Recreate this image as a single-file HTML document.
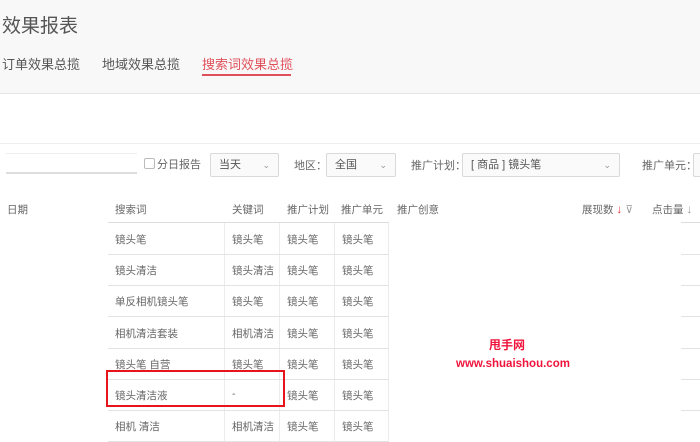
<!DOCTYPE html>
<html><head><meta charset="utf-8"><style>
*{margin:0;padding:0;box-sizing:border-box}
body{width:700px;height:442px;overflow:hidden;background:#fff;font-family:"Liberation Sans","Noto Sans CJK SC",sans-serif;color:#666;position:relative;font-size:11px}
.abs{position:absolute;white-space:nowrap}
.top{position:absolute;left:0;top:0;width:700px;height:94px;background:#f8f8f9;border-bottom:1px solid #e6e6e6}
.sel{position:absolute;height:24px;border:1px solid #d9d9d9;border-radius:2px;background:#fafafa;font-size:11px;line-height:22px;padding-left:8px;color:#555}
.sel i{position:absolute;right:8px;top:0;font-style:normal;color:#999;font-size:9px}
.h{position:absolute;top:202px;font-size:10.5px;color:#666}
.hl{position:absolute;height:1px;background:#e3e3e3}
.vl{position:absolute;width:1px;background:#ececec}
.c{position:absolute;font-size:10.5px;color:#666;white-space:nowrap}
</style></head><body>
<div class="top"></div>
<div class="abs" style="left:2px;top:11px;font-size:19px;color:#555">效果报表</div>
<div class="abs" style="left:2px;top:54px;font-size:13px;color:#555">订单效果总揽</div>
<div class="abs" style="left:102px;top:54px;font-size:13px;color:#555">地域效果总揽</div>
<div class="abs" style="left:202px;top:54px;font-size:13px;color:#e0505a">搜索词效果总揽</div>
<div class="abs" style="left:202px;top:74px;width:89px;height:2px;background:#e0505a"></div>
<div class="hl" style="left:0;top:143px;width:700px;background:#efefef"></div>
<div class="abs" style="left:6px;top:153px;width:131px;height:21px;border-bottom:2px solid #ddd;border-top:1px solid #eee"></div>
<div class="abs" style="left:144px;top:158px;width:11px;height:11px;border:1px solid #bbb;border-radius:2px"></div>
<div class="abs" style="left:157px;top:156px;font-size:11px">分日报告</div>
<div class="sel" style="left:210px;top:153px;width:69px">当天<i>⌄</i></div>
<div class="abs" style="left:294px;top:157px">地区：</div>
<div class="sel" style="left:326px;top:153px;width:70px">全国<i>⌄</i></div>
<div class="abs" style="left:411px;top:157px">推广计划：</div>
<div class="sel" style="left:462px;top:153px;width:158px">[ 商品 ] 镜头笔<i>⌄</i></div>
<div class="abs" style="left:642px;top:157px">推广单元：</div>
<div class="sel" style="left:693px;top:153px;width:20px"></div>
<div class="h" style="left:7px">日期</div>
<div class="h" style="left:115px">搜索词</div>
<div class="h" style="left:232px">关键词</div>
<div class="h" style="left:287px">推广计划</div>
<div class="h" style="left:341px">推广单元</div>
<div class="h" style="left:397px">推广创意</div>
<div class="h" style="left:582px">展现数 <span style="color:#e33;font-size:12px">↓</span> <span style="color:#999">⊽</span></div>
<div class="h" style="left:652px">点击量 <span style="color:#999;font-size:12px">↓</span></div>
<div class="vl" style="left:224px;top:222px;height:220px"></div>
<div class="vl" style="left:279px;top:222px;height:220px"></div>
<div class="vl" style="left:334px;top:222px;height:220px"></div>
<div class="vl" style="left:388px;top:222px;height:220px"></div>
<div class="hl" style="left:108px;top:222px;width:281px;background:#ddd"></div>
<div class="hl" style="left:108px;top:254px;width:281px"></div>
<div class="hl" style="left:108px;top:285px;width:281px"></div>
<div class="hl" style="left:108px;top:316px;width:281px"></div>
<div class="hl" style="left:108px;top:348px;width:281px"></div>
<div class="hl" style="left:108px;top:379px;width:281px"></div>
<div class="hl" style="left:108px;top:410px;width:281px"></div>
<div class="hl" style="left:108px;top:441px;width:281px"></div>
<div class="hl" style="left:681px;top:222px;width:19px;background:#ddd"></div>
<div class="hl" style="left:681px;top:254px;width:19px"></div>
<div class="hl" style="left:681px;top:285px;width:19px"></div>
<div class="hl" style="left:681px;top:316px;width:19px"></div>
<div class="hl" style="left:681px;top:348px;width:19px"></div>
<div class="hl" style="left:681px;top:379px;width:19px"></div>
<div class="hl" style="left:681px;top:410px;width:19px"></div>
<div class="c" style="left:115px;top:232px">镜头笔</div><div class="c" style="left:232px;top:232px">镜头笔</div><div class="c" style="left:287px;top:232px">镜头笔</div><div class="c" style="left:342px;top:232px">镜头笔</div>
<div class="c" style="left:115px;top:263px">镜头清洁</div><div class="c" style="left:232px;top:263px">镜头清洁</div><div class="c" style="left:287px;top:263px">镜头笔</div><div class="c" style="left:342px;top:263px">镜头笔</div>
<div class="c" style="left:115px;top:294px">单反相机镜头笔</div><div class="c" style="left:232px;top:294px">镜头笔</div><div class="c" style="left:287px;top:294px">镜头笔</div><div class="c" style="left:342px;top:294px">镜头笔</div>
<div class="c" style="left:115px;top:326px">相机清洁套装</div><div class="c" style="left:232px;top:326px">相机清洁</div><div class="c" style="left:287px;top:326px">镜头笔</div><div class="c" style="left:342px;top:326px">镜头笔</div>
<div class="c" style="left:115px;top:357px">镜头笔 自营</div><div class="c" style="left:232px;top:357px">镜头笔</div><div class="c" style="left:287px;top:357px">镜头笔</div><div class="c" style="left:342px;top:357px">镜头笔</div>
<div class="c" style="left:115px;top:388px">镜头清洁液</div><div class="c" style="left:232px;top:388px">-</div><div class="c" style="left:287px;top:388px">镜头笔</div><div class="c" style="left:342px;top:388px">镜头笔</div>
<div class="c" style="left:115px;top:419px">相机 清洁</div><div class="c" style="left:232px;top:419px">相机清洁</div><div class="c" style="left:287px;top:419px">镜头笔</div><div class="c" style="left:342px;top:419px">镜头笔</div>
<div class="abs" style="left:106px;top:370px;width:179px;height:37px;border:2px solid #e8141b"></div>
<div class="abs" style="left:489px;top:336px;font-size:12px;color:#f0143c;font-weight:bold">甩手网</div>
<div class="abs" style="left:456px;top:358px;font-size:11.5px;color:#f0143c;font-weight:bold">www.shuaishou.com</div>
</body></html>
